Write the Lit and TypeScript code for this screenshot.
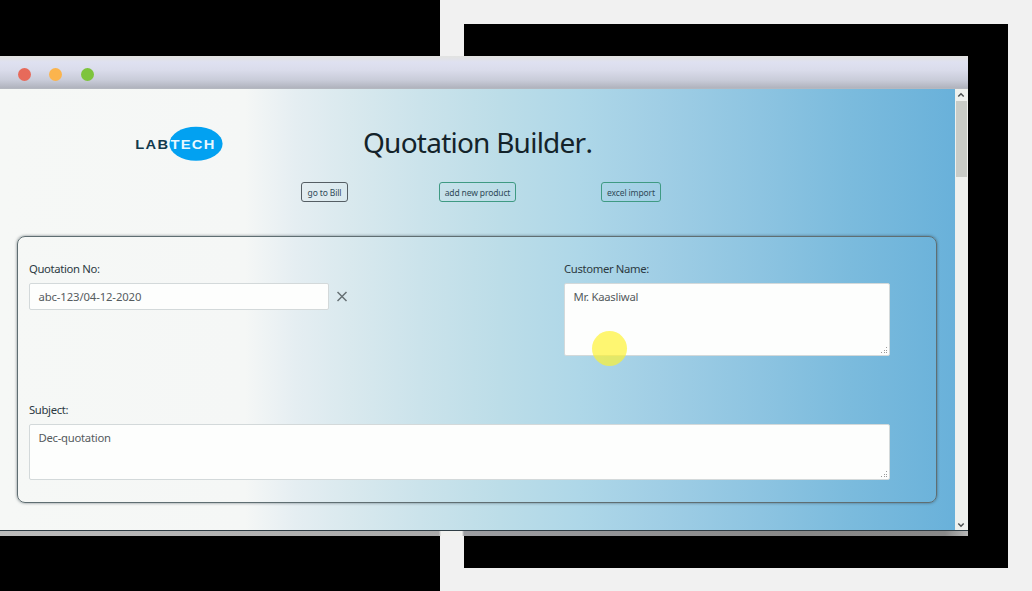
import { LitElement, html, css, svg } from "lit";
import { customElement, property } from "lit/decorators.js";

@customElement("lab-logo")
class LabLogo extends LitElement {
  static styles = css`
    :host { display: block; width: 90px; height: 36px; }
    svg { display: block; }
    text { font: bold 12.8px "Liberation Sans", Arial, sans-serif; letter-spacing: 1.1px; }
    .oval { fill: #02a1f1; }
    .dark { fill: #123a4d; }
    .light { fill: #e8f8ff; }
  `;
  render() {
    return html`<svg width="90" height="36" viewBox="0 0 90 36">
      <ellipse class="oval" cx="61" cy="18.7" rx="26.6" ry="17"></ellipse>
      <text class="dark" transform="translate(0.3 23.6) scale(1.15 1)">LAB</text>
      <text class="light" transform="translate(35.5 23.6) scale(1.15 1)">TECH</text>
    </svg>`;
  }
}

@customElement("form-field")
class FormField extends LitElement {
  @property() label = "";
  @property() value = "";
  @property({ type: Boolean }) area = false;
  static styles = css`
    :host { display: flex; flex-direction: column; }
    .label { height: 20px; line-height: 20px; font-size: 11.3px; color: #2c3a42; margin-bottom: 4px; letter-spacing: -0.35px; white-space: nowrap; }
    .box { flex: 1; box-sizing: border-box; background: #fdfefd; border: 1px solid #d3d9da; border-radius: 2px; padding: 4px 8.5px; font-size: 11.3px; line-height: 18px; color: #555b5e; letter-spacing: -0.12px; display: flex; justify-content: space-between; }
    .single { line-height: 17px; }
    .area { letter-spacing: -0.27px; }
    .grip { align-self: flex-end; margin: 0 -7px -3px 0; }
  `;
  render() {
    const dots = [[5, 0], [3, 3], [5, 3], [0, 5], [3, 5], [5, 5]];
    return html`<div class="label">${this.label}</div>
      <div class="box ${this.area ? "area" : "single"}"><span>${this.value}</span>
        ${this.area ? html`<svg class="grip" width="7" height="7">${dots.map(([x, y]) => svg`<rect x=${x} y=${y} width="1" height="1" fill="#999"></rect>`)}</svg>` : ""}
      </div>`;
  }
}

@customElement("app-root")
class AppRoot extends LitElement {
  static styles = css`
    :host { display: block; font-family: "Noto Sans", "Open Sans", sans-serif; }
    .stage { position: relative; box-sizing: border-box; width: 1032px; height: 591px; background: #f1f1f1; display: flex; gap: 24px; overflow: hidden; }
    .left { width: 440px; background: #000; }
    .right { width: 544px; height: 544px; margin-top: 24px; background: #000; }
    .window { position: absolute; left: 0; top: 56px; width: 968px; height: 480px; display: flex; flex-direction: column; }
    .bar { height: 33px; flex: none; box-sizing: border-box; padding: 4px 0 0 18px; display: flex; align-items: center; gap: 18.4px; background: linear-gradient(#e2e3e1 0, #e1e2e7 3px, #dfe1f1 6px, #dadceb 14px, #c9ccd9 24px, #b0b3bd 32px, #b8bcc2 33px); }
    .dot { width: 13px; height: 13px; border-radius: 50%; }
    .red { background: #e76a5a; }
    .amber { background: #fbb44d; }
    .green { background: #7ec43c; }
    .view { height: 441px; display: flex; }
    .page { width: 955px; box-sizing: border-box; padding: 0 17px; background: linear-gradient(90deg, #f6f8f6 0, #f5f7f6 245px, #e5eef2 295px, #d9e9ee 350px, #cbe3eb 420px, #bcdde8 500px, #aed7e8 580px, #a0cee5 660px, #8dc4e1 760px, #7bbbdd 850px, #69b1da 955px); }
    .head { height: 147px; display: grid; grid-template-columns: 302px 1fr; grid-template-rows: 93px 54px; }
    lab-logo { margin: 36px 0 0 118px; }
    h1 { margin: 33px 0 0 44px; font-size: 28px; line-height: 40px; font-weight: 400; color: #14232a; letter-spacing: -0.76px; white-space: nowrap; font-kerning: none; }
    .actions { grid-column: 1 / 3; display: flex; padding-left: 284px; align-items: flex-start; }
    .btn { box-sizing: border-box; height: 20px; border: 1px solid #3f9a83; border-radius: 3px; background: none; font: 8.5px/19px "Noto Sans", sans-serif; color: #2f4a58; padding: 0; text-align: center; white-space: nowrap; letter-spacing: -0.13px; }
    .bill { width: 47px; border-color: #555e64; margin-right: 91px; }
    .add { width: 77px; margin-right: 85px; }
    .excel { width: 60px; }
    .card { box-sizing: border-box; width: 920px; height: 267px; border: 1px solid #5f6e72; border-radius: 8px; box-shadow: 0 0 3px rgba(50, 65, 70, 0.65); padding: 22px 0 0 11px; }
    .row { display: flex; align-items: flex-start; height: 141px; }
    .no { width: 300px; height: 51px; }
    .close { margin: 32px 0 0 8px; width: 11px; height: 11px; }
    .customer { width: 326px; height: 97px; margin-left: 216px; }
    .subject { width: 861px; height: 80px; }
    .scroll { width: 13px; background: #eff1ee; display: flex; flex-direction: column; align-items: center; box-sizing: border-box; padding-right: 1px; }
    .scroll svg { flex: none; }
    .thumb { width: 11px; height: 76px; background: #c9ccc7; margin-bottom: auto; }
    .foot { height: 6px; border-top: 1px solid #303e46; box-sizing: border-box; background: linear-gradient(90deg, #bcbcbc 0, #aaa 439px, #f1f1ef 441px, #f1f1ef 462px, #9d9ea2 464px, #888 800px, #898989 945px, #b8b8b8 968px); }
    .pointer { position: absolute; left: 592px; top: 331px; width: 35px; height: 35px; border-radius: 50%; background: rgba(253, 242, 45, 0.68); }
  `;
  render() {
    return html`<div class="stage">
      <div class="left"></div>
      <div class="right"></div>
      <div class="window">
        <div class="bar"><i class="dot red"></i><i class="dot amber"></i><i class="dot green"></i></div>
        <div class="view">
          <main class="page">
            <header class="head">
              <lab-logo></lab-logo>
              <h1>Quotation Builder.</h1>
              <div class="actions">
                <button class="btn bill">go to Bill</button>
                <button class="btn add">add new product</button>
                <button class="btn excel">excel import</button>
              </div>
            </header>
            <section class="card">
              <div class="row">
                <form-field class="no" label="Quotation No:" value="abc-123/04-12-2020"></form-field>
                <svg class="close" viewBox="0 0 11 11"><path d="M0.5 1L9.5 10M9.5 1L0.5 10" stroke="#667073" stroke-width="1.5" fill="none"></path></svg>
                <form-field class="customer" area label="Customer Name:" value="Mr. Kaasliwal"></form-field>
              </div>
              <form-field class="subject" area label="Subject:" value="Dec-quotation"></form-field>
            </section>
          </main>
          <div class="scroll">
            <svg width="12" height="12"><path d="M3.3 7.5L6 4.8L8.7 7.5" fill="none" stroke="#4b4f50" stroke-width="1.5"></path></svg>
            <div class="thumb"></div>
            <svg width="12" height="12"><path d="M3.3 5.5L6 8.2L8.7 5.5" fill="none" stroke="#4b4f50" stroke-width="1.5"></path></svg>
          </div>
        </div>
        <div class="foot"></div>
      </div>
      <div class="pointer"></div>
    </div>`;
  }
}
